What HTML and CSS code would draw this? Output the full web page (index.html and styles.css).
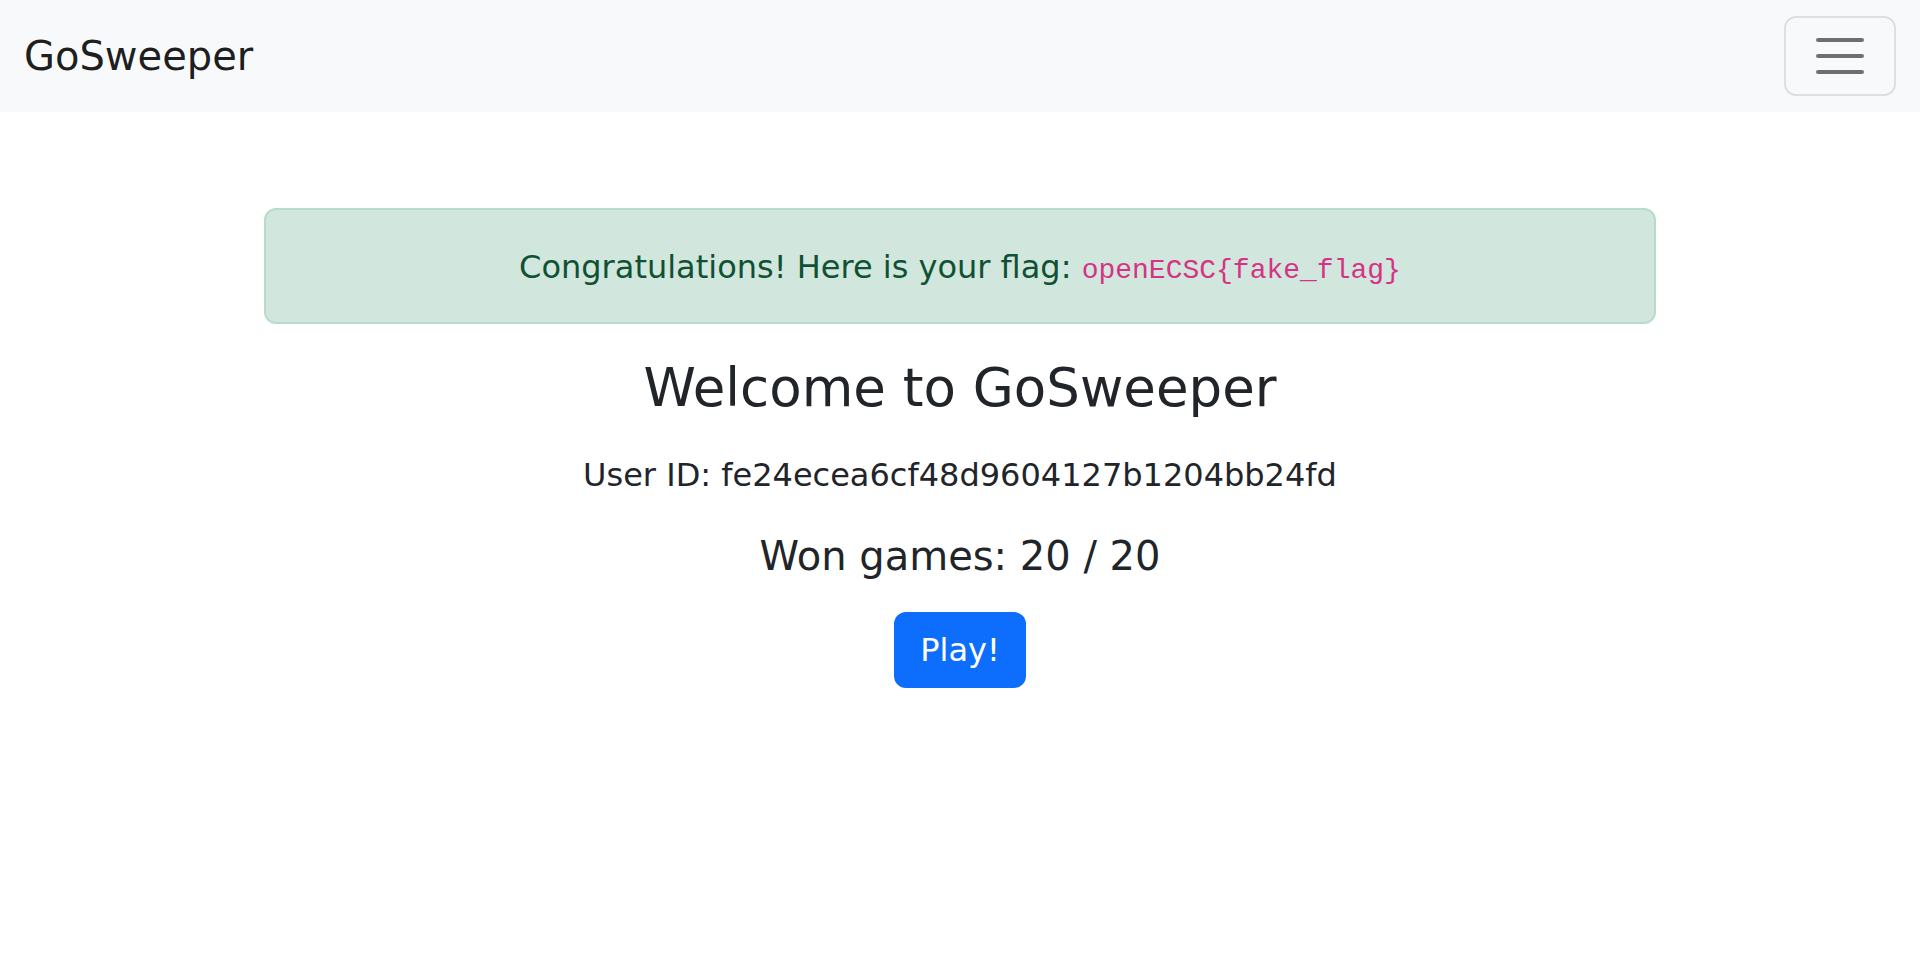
FILE: index.html
```html
<!DOCTYPE html>
<html lang="en">
<head>
<meta charset="utf-8">
<title>GoSweeper</title>
<link rel="stylesheet" href="styles.css">
</head>
<body>
<nav class="navbar">
  <a class="brand" href="#">GoSweeper</a>
  <button class="toggler" type="button" aria-label="Toggle navigation">
    <svg class="toggler-icon" viewBox="0 0 30 30" width="60" height="60">
      <path stroke="rgba(0,0,0,0.55)" stroke-linecap="round" stroke-miterlimit="10" stroke-width="2" d="M4 7h22M4 15h22M4 23h22"/>
    </svg>
  </button>
</nav>
<main class="container">
  <div class="alert">Congratulations! Here is your flag: <code class="flag">openECSC{fake_flag}</code></div>
  <h3 class="title">Welcome to GoSweeper</h3>
  <p class="user">User ID: fe24ecea6cf48d9604127b1204bb24fd</p>
  <h5 class="won">Won games: 20 / 20</h5>
  <a class="btn-play" href="#">Play!</a>
</main>
</body>
</html>
```
FILE: styles.css
```css
* { box-sizing: border-box; }
html, body { margin: 0; padding: 0; }
body {
  font-family: "DejaVu Sans", sans-serif;
  font-size: 32px;
  line-height: 1.5;
  color: #212529;
  background: #fff;
}
.navbar {
  background: #f8f9fa;
  height: 112px;
  padding: 16px 24px;
  display: flex;
  align-items: center;
  justify-content: space-between;
}
.brand {
  font-size: 40px;
  line-height: 60px;
  color: rgba(0,0,0,0.9);
  text-decoration: none;
}
.toggler {
  width: 112px;
  height: 80px;
  padding: 8px 24px;
  border: 2px solid rgba(0,0,0,0.1);
  border-radius: 12px;
  background: transparent;
  display: flex;
  align-items: center;
  justify-content: center;
}
.toggler-icon { display: block; }
.container {
  width: 1440px;
  margin: 96px auto 0;
  padding: 0 24px;
  text-align: center;
}
.alert {
  background: #d1e7dd;
  border: 2px solid #badbcc;
  border-radius: 12px;
  color: #0f5132;
  padding: 33px 32px 31px;
  margin-bottom: 32px;
  height: 116px;
  line-height: 48px;
}
.flag {
  font-family: "Liberation Mono", monospace;
  font-size: 28px;
  line-height: 1;
  color: #d63384;
}
.title {
  font-size: 53px;
  font-weight: 500;
  line-height: 1.2;
  margin: 0 0 31px;
}
.user {
  margin: 0 0 33px;
  line-height: 48px;
}
.won {
  font-size: 40px;
  font-weight: 500;
  line-height: 48px;
  margin: 0 0 32px;
}
.btn-play {
  display: inline-block;
  background: #0d6efd;
  border: 2px solid #0d6efd;
  color: #fff;
  border-radius: 12px;
  padding: 12px 24px;
  line-height: 48px;
  font-size: 32px;
  text-decoration: none;
}
```
